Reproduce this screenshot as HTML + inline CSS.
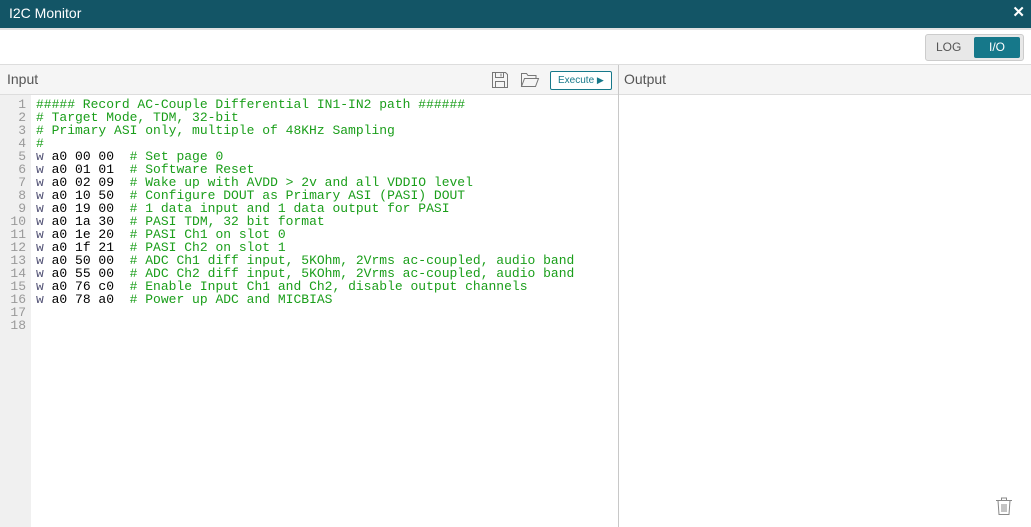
<!DOCTYPE html>
<html><head><style>
*{margin:0;padding:0;box-sizing:border-box}
body{width:1031px;height:527px;overflow:hidden;background:#fff;font-family:"Liberation Sans",sans-serif;position:relative}
.title{position:absolute;left:0;top:0;width:1031px;height:28px;background:#135566;color:#fff;font-size:14px;line-height:26px;padding-left:9px}
.x{position:absolute;right:6px;top:5px;color:#fff;font-size:15px;font-weight:bold;line-height:16px}
.sep{position:absolute;left:0;top:28px;width:1031px;height:2px;background:#e2e2e2}
.tb{position:absolute;left:0;top:30px;width:1031px;height:35px;background:#fff;border-bottom:1px solid #ddd}
.tog{position:absolute;left:925px;top:34px;width:99px;height:27px;border:1px solid #ccc;border-radius:3px;background:#e8e8e8}
.log{position:absolute;left:10px;top:5px;font-size:12px;color:#555}
.io{position:absolute;left:48px;top:2px;width:46px;height:21px;background:#16788a;border-radius:2px;color:#fff;font-size:12px;text-align:center;line-height:21px}
.hdr{position:absolute;top:65px;height:30px;background:#f5f5f5;border-bottom:1px solid #ddd;font-size:14px;color:#555;line-height:29px;padding-left:7px}
.vd{position:absolute;left:618px;top:65px;width:1px;height:462px;background:#c8c8c8}
.gut{position:absolute;left:0;top:95px;width:31px;height:432px;background:#f0f0f0}
.code{position:absolute;left:0;top:98px;font-family:"Liberation Mono",monospace;font-size:13px;line-height:13px;white-space:pre}
.ln{display:inline-block;width:26px;text-align:right;color:#999;margin-right:10px}
.w{color:#557}
.c{color:#1a9e1a}
.ex{position:absolute;left:550px;top:71px;width:62px;height:19px;border:1px solid #16788a;border-radius:2px;background:#fff;font-size:10px;color:#16788a;line-height:17px;padding-left:7px}
</style></head><body>
<div class="title">I2C Monitor</div><div class="x">✕</div>
<div class="sep"></div>
<div class="tb"></div>
<div class="tog"><span class="log">LOG</span><div class="io">I/O</div></div>
<div class="hdr" style="left:0;width:618px">Input</div>
<div class="hdr" style="left:619px;width:412px;padding-left:5px">Output</div>
<svg style="position:absolute;left:491px;top:71px" width="18" height="18" viewBox="0 0 18 18" fill="none" stroke="#777" stroke-width="1"><path d="M1.5 1.5h13l2 2v13h-15z"/><path d="M4.5 1.5v5h8v-5"/><path d="M10 2.5v3"/><path d="M4.5 16.5v-6h9v6"/></svg>
<svg style="position:absolute;left:520px;top:72px" width="20" height="16" viewBox="0 0 20 16" fill="none" stroke="#777" stroke-width="1"><path d="M1.5 14.5v-13h5l1.5 2h8v3"/><path d="M1.5 14.5l3-8h14l-3 8z"/></svg>
<div class="ex">Execute <span style="font-size:9px">▶</span></div>
<div class="vd"></div>
<div class="gut"></div>
<div class="code"><span class="ln">1</span><span class="c">##### Record AC-Couple Differential IN1-IN2 path ######</span>
<span class="ln">2</span><span class="c"># Target Mode, TDM, 32-bit</span>
<span class="ln">3</span><span class="c"># Primary ASI only, multiple of 48KHz Sampling</span>
<span class="ln">4</span><span class="c">#</span>
<span class="ln">5</span><span class="w">w</span> a0 00 00  <span class="c"># Set page 0</span>
<span class="ln">6</span><span class="w">w</span> a0 01 01  <span class="c"># Software Reset</span>
<span class="ln">7</span><span class="w">w</span> a0 02 09  <span class="c"># Wake up with AVDD &gt; 2v and all VDDIO level</span>
<span class="ln">8</span><span class="w">w</span> a0 10 50  <span class="c"># Configure DOUT as Primary ASI (PASI) DOUT</span>
<span class="ln">9</span><span class="w">w</span> a0 19 00  <span class="c"># 1 data input and 1 data output for PASI</span>
<span class="ln">10</span><span class="w">w</span> a0 1a 30  <span class="c"># PASI TDM, 32 bit format</span>
<span class="ln">11</span><span class="w">w</span> a0 1e 20  <span class="c"># PASI Ch1 on slot 0</span>
<span class="ln">12</span><span class="w">w</span> a0 1f 21  <span class="c"># PASI Ch2 on slot 1</span>
<span class="ln">13</span><span class="w">w</span> a0 50 00  <span class="c"># ADC Ch1 diff input, 5KOhm, 2Vrms ac-coupled, audio band</span>
<span class="ln">14</span><span class="w">w</span> a0 55 00  <span class="c"># ADC Ch2 diff input, 5KOhm, 2Vrms ac-coupled, audio band</span>
<span class="ln">15</span><span class="w">w</span> a0 76 c0  <span class="c"># Enable Input Ch1 and Ch2, disable output channels</span>
<span class="ln">16</span><span class="w">w</span> a0 78 a0  <span class="c"># Power up ADC and MICBIAS</span>
<span class="ln">17</span>
<span class="ln">18</span></div>
<svg style="position:absolute;left:995px;top:496px" width="18" height="20" viewBox="0 0 18 20" fill="none" stroke="#888" stroke-width="1"><path d="M1 4.5h16"/><path d="M6.5 4.5v-2.5h5v2.5"/><path d="M3 4.5l1 14h10l1-14"/><path d="M7 8v8M9 8v8M11 8v8"/></svg>
</body></html>
